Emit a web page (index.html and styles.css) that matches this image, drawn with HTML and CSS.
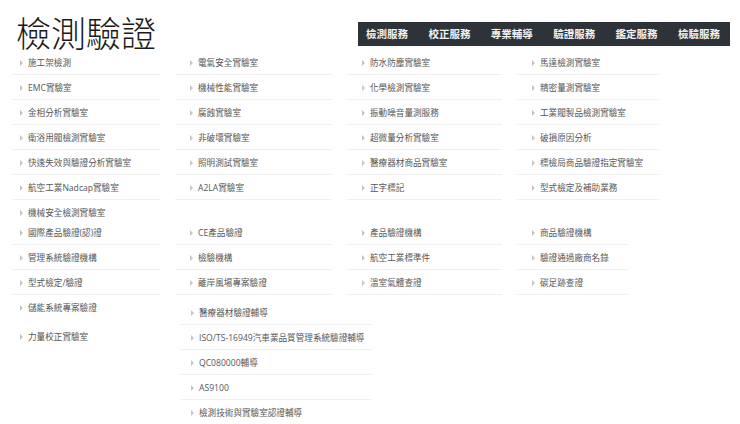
FILE: index.html
```html
<!DOCTYPE html>
<html lang="zh-Hant">
<head>
<meta charset="utf-8">
<title>檢測驗證</title>
<link rel="stylesheet" href="styles.css">
</head>
<body>
<header class="top">
  <h1 class="title">檢測驗證</h1>
  <nav class="tabs">
    <a class="tab">檢測服務</a>
    <a class="tab">校正服務</a>
    <a class="tab">專業輔導</a>
    <a class="tab">驗證服務</a>
    <a class="tab">鑑定服務</a>
    <a class="tab">檢驗服務</a>
  </nav>
</header>
<main class="menu">
  <section class="group">
    <ul class="col col-first">
      <li class="item">施工架檢測</li>
      <li class="item">EMC實驗室</li>
      <li class="item">金相分析實驗室</li>
      <li class="item">衛浴用閥檢測實驗室</li>
      <li class="item">快速失效與驗證分析實驗室</li>
      <li class="item">航空工業Nadcap實驗室</li>
      <li class="item item-end">機械安全檢測實驗室</li>
    </ul>
    <ul class="col">
      <li class="item">電氣安全實驗室</li>
      <li class="item">機械性能實驗室</li>
      <li class="item">腐蝕實驗室</li>
      <li class="item">非破壞實驗室</li>
      <li class="item">照明測試實驗室</li>
      <li class="item">A2LA實驗室</li>
    </ul>
    <ul class="col">
      <li class="item">防水防塵實驗室</li>
      <li class="item">化學檢測實驗室</li>
      <li class="item">振動噪音量測服務</li>
      <li class="item">超微量分析實驗室</li>
      <li class="item">醫療器材商品實驗室</li>
      <li class="item">正字標記</li>
    </ul>
    <ul class="col">
      <li class="item">馬達檢測實驗室</li>
      <li class="item">精密量測實驗室</li>
      <li class="item">工業閥製品檢測實驗室</li>
      <li class="item">破損原因分析</li>
      <li class="item">標檢局商品驗證指定實驗室</li>
      <li class="item">型式檢定及補助業務</li>
    </ul>
  </section>
  <section class="group">
    <ul class="col col-first">
      <li class="item">國際產品驗證(認)證</li>
      <li class="item">管理系統驗證機構</li>
      <li class="item">型式檢定/驗證</li>
      <li class="item item-plain">儲能系統專案驗證</li>
      <li class="item item-plain">力量校正實驗室</li>
    </ul>
    <div class="col-wrap">
      <ul class="col">
        <li class="item">CE產品驗證</li>
        <li class="item">檢驗機構</li>
        <li class="item">離岸風場專案驗證</li>
      </ul>
      <ul class="col col-sub">
        <li class="item">醫療器材驗證輔導</li>
        <li class="item">ISO/TS-16949汽車業品質管理系統驗證輔導</li>
        <li class="item">QC080000輔導</li>
        <li class="item">AS9100</li>
        <li class="item">檢測技術與實驗室認證輔導</li>
      </ul>
    </div>
    <ul class="col">
      <li class="item">產品驗證機構</li>
      <li class="item">航空工業標準件</li>
      <li class="item">溫室氣體查證</li>
    </ul>
    <ul class="col col-narrow">
      <li class="item">商品驗證機構</li>
      <li class="item">驗證通過廠商名錄</li>
      <li class="item">碳足跡查證</li>
    </ul>
  </section>
</main>
</body>
</html>
```
FILE: styles.css
```css
html, body {
  margin: 0;
  padding: 0;
  background: #ffffff;
}

body {
  width: 740px;
  height: 424px;
  overflow: hidden;
  font-family: "Open Sans", "Noto Sans CJK TC", sans-serif;
  color: #555555;
}

.top {
  display: flex;
  align-items: flex-start;
  height: 50px;
}

.title {
  margin: 14px 0 0 16px;
  font-family: "Noto Sans CJK TC", sans-serif;
  font-weight: 300;
  font-size: 35px;
  line-height: 35px;
  color: #1a1a1a;
  letter-spacing: 0;
}

.tabs {
  margin: 22px 10px 0 auto;
  height: 24px;
  background: #2e3339;
  display: flex;
  align-items: center;
  gap: 20.4px;
  padding: 0 10px 0 8px;
}

.tab {
  font-family: "Noto Sans CJK TC", sans-serif;
  font-weight: 700;
  font-size: 10.5px;
  line-height: 24px;
  color: #f2f2f2;
  white-space: nowrap;
}

.menu {
  padding-left: 12px;
}

.group {
  display: grid;
  grid-template-columns: 148px 157px 155px 142px;
  column-gap: 15px;
  align-items: start;
}

.col {
  list-style: none;
  margin: 0;
  padding: 0;
  --pad: 14px;
}

.col-first {
  --pad: 7px;
}

.col-narrow {
  width: 111px;
}

.col-wrap {
  display: flex;
  flex-direction: column;
}

.col-sub {
  margin: 5px 0 0 5px;
  width: 192px;
  --pad: 10px;
}

.item {
  display: flex;
  align-items: center;
  height: 12px;
  padding: 7px 0 5px var(--pad);
  border-bottom: 1px solid #f0f0f0;
  font-size: 8.6px;
  line-height: 12px;
  white-space: nowrap;
  color: #575757;
}

.item::before {
  content: "";
  display: block;
  width: 0;
  height: 0;
  border-left: 3px solid #c6c6c6;
  border-top: 3px solid transparent;
  border-bottom: 3px solid transparent;
  margin: 0 5px 0 1px;
  flex: none;
}

.item-end {
  border-bottom: none;
  padding-bottom: 1px;
}

.item-plain {
  border-bottom: none;
  padding-bottom: 10px;
}
```
